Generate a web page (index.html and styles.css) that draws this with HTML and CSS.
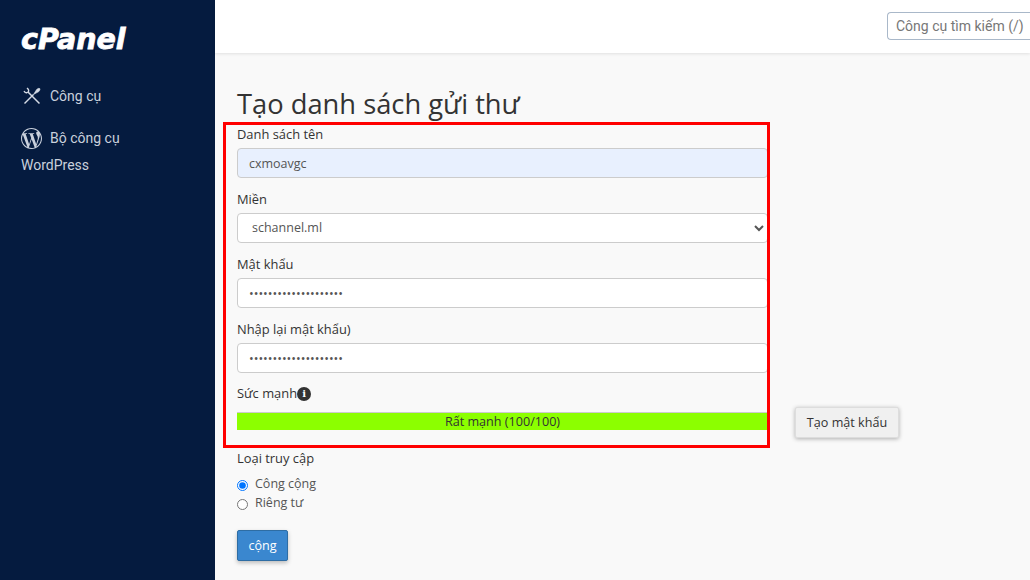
FILE: index.html
```html
<!DOCTYPE html>
<html lang="vi">
<head>
<meta charset="UTF-8">
<meta name="viewport" content="width=device-width, initial-scale=1.0">
<title>Tạo danh sách gửi thư</title>
<link rel="stylesheet" href="styles.css">
</head>
<body>

<div class="sidebar">
    <div class="logo">cPanel</div>
    <a class="side-link" href="#">
        <svg class="side-icon" viewBox="0 0 20 20" fill="none" stroke="#d5dbe5">
            <path d="M2.5 17.5 L11.5 8.5" stroke-width="1.5" />
            <path d="M11.5 8.5 L14.6 3.6 Q16.6 1.8 17.8 2.6 Q18.6 3.8 16.8 5.6 Z" fill="#d5dbe5" stroke-width="0.6" />
            <path d="M6 6 L17.5 17.5" stroke-width="1.5" />
            <path d="M2 5 Q3 7.2 5 6.6 Q7 6 6.6 4 Q6.2 3 5 2" stroke-width="1.3" />
        </svg>
        <span>Công cụ</span>
    </a>
    <a class="side-link wp-link" href="#">
        <svg class="side-icon wp-icon" viewBox="0 0 24 24" fill="#c9d0dc">
            <path d="M21.469 6.825c.84 1.537 1.318 3.3 1.318 5.175 0 3.979-2.156 7.456-5.363 9.325l3.295-9.527c.615-1.54.82-2.771.82-3.864 0-.405-.026-.78-.07-1.11m-7.981.105c.647-.03 1.232-.105 1.232-.105.582-.075.514-.93-.067-.899 0 0-1.755.135-2.88.135-1.064 0-2.85-.15-2.85-.15-.585-.03-.661.855-.075.885 0 0 .54.061 1.125.09l1.68 4.605-2.37 7.08L5.354 6.9c.649-.03 1.234-.1 1.234-.1.585-.075.516-.93-.065-.896 0 0-1.746.138-2.874.138-.2 0-.438-.008-.69-.015C4.911 3.15 8.235 1.215 12 1.215c2.809 0 5.365 1.072 7.286 2.833-.046-.003-.091-.009-.141-.009-1.06 0-1.812.923-1.812 1.914 0 .89.513 1.643 1.06 2.531.411.72.89 1.643.89 2.977 0 .915-.354 1.994-.821 3.479l-1.075 3.585-3.9-11.61.001.014zM12 22.784c-1.059 0-2.081-.153-3.048-.437l3.237-9.406 3.315 9.087c.024.053.05.101.078.149-1.12.393-2.325.609-3.582.609M1.211 12c0-1.564.336-3.05.935-4.39L7.29 21.709C3.694 19.96 1.212 16.271 1.211 12M12 0C5.385 0 0 5.385 0 12s5.385 12 12 12 12-5.385 12-12S18.615 0 12 0"/>
        </svg>
        <span class="wp-text">Bộ công cụ</span>
        <span class="wp-text wp-line">WordPress</span>
    </a>
</div>

<div class="page">
    <div class="topbar">
        <input class="search" type="text" placeholder="Công cụ tìm kiếm (/)">
    </div>

    <div class="content">
        <h1>Tạo danh sách gửi thư</h1>

        <div class="field">
            <label>Danh sách tên</label>
            <input class="input filled" type="text" value="cxmoavgc">
        </div>
        <div class="field">
            <label>Miền</label>
            <select class="input select">
                <option>schannel.ml</option>
            </select>
        </div>
        <div class="field">
            <label>Mật khẩu</label>
            <input class="input" type="password" value="aaaaaaaaaaaaaaaaaaaa">
        </div>
        <div class="field">
            <label>Nhập lại mật khẩu)</label>
            <input class="input" type="password" value="aaaaaaaaaaaaaaaaaaaa">
        </div>

        <div class="strength">
            <label>Sức mạnh<span class="info">i</span></label>
            <div class="strength-row">
                <div class="meter">Rất mạnh (100/100)</div>
                <button class="gen-btn" type="button">Tạo mật khẩu</button>
            </div>
        </div>

        <div class="access">
            <label>Loại truy cập</label>
            <div class="radio"><input type="radio" name="access" checked><span>Công cộng</span></div>
            <div class="radio"><input type="radio" name="access"><span>Riêng tư</span></div>
        </div>

        <button class="submit" type="button">cộng</button>

        <div class="highlight"></div>
    </div>
</div>

</body>
</html>
```

FILE: styles.css
```css
html, body {
    height: 100%;
}
body {
    font-family: "Open Sans", sans-serif;
    margin: 0;
    padding: 0;
    background-color: #f9f9f9;
    color: #333;
    display: flex;
    overflow: hidden;
}

.sidebar {
    width: 215px;
    flex-shrink: 0;
    background-color: #051b3f;
    padding: 22px 0 0 21px;
    box-sizing: border-box;
}
.logo {
    font-family: "DejaVu Sans", sans-serif;
    font-size: 28.5px;
    font-weight: 700;
    font-style: italic;
    line-height: 36px;
    color: #fff;
    -webkit-text-stroke: 0.8px #fff;
    margin-bottom: 20px;
}
.side-link {
    display: flex;
    align-items: center;
    font-family: Roboto, sans-serif;
    font-size: 14px;
    color: #c9d0dc;
    text-decoration: none;
    height: 36px;
}
.side-icon {
    width: 20px;
    height: 20px;
    margin: 0 8px 0 1px;
}
.wp-link {
    flex-wrap: wrap;
    height: auto;
    margin-top: 13px;
}
.wp-icon {
    width: 21px;
    height: 21px;
    margin: 0 8px 0 0;
}
.wp-text {
    line-height: 22px;
}
.wp-line {
    width: 100%;
    margin-top: 5px;
}

.page {
    flex: 1;
    min-width: 0;
}
.topbar {
    height: 53px;
    background-color: #fff;
    box-shadow: 0 1px 3px rgba(0, 0, 0, 0.1);
    display: flex;
    justify-content: flex-end;
    padding-top: 12px;
    box-sizing: border-box;
}
.search {
    width: 143px;
    height: 28px;
    box-sizing: border-box;
    border: 1px solid #a9b8c9;
    border-right: none;
    border-radius: 4px 0 0 4px;
    padding: 0 0 0 8px;
    font-family: Roboto, sans-serif;
    font-size: 14px;
}
.search::placeholder {
    color: #777;
}

.content {
    position: relative;
    padding: 31px 0 0 22px;
}
h1 {
    font-size: 27.3px;
    font-weight: 400;
    line-height: 40px;
    margin: 0;
}
label {
    display: block;
    font-size: 12.9px;
    font-weight: 500;
    line-height: 20px;
    margin-bottom: 4px;
}
.field {
    width: 531px;
    margin-bottom: 11px;
}
.input {
    display: block;
    width: 100%;
    height: 30px;
    box-sizing: border-box;
    border: 1px solid #ccc;
    border-radius: 4px;
    background-color: #fff;
    padding: 0 11px;
    font-family: "Open Sans", sans-serif;
    font-size: 12.5px;
    color: #555;
}
.select {
    padding: 0 10px 2px;
}
.filled {
    background-color: #e8f0fe;
}
.strength {
    margin-top: -1px;
}
.strength label {
    margin-bottom: 3px;
}
.info {
    display: inline-block;
    width: 14px;
    height: 14px;
    border-radius: 50%;
    background-color: #333;
    color: #fff;
    font-family: "DejaVu Serif", serif;
    font-size: 10px;
    font-weight: 700;
    line-height: 14px;
    text-align: center;
    vertical-align: 1px;
}
.strength-row {
    display: flex;
    align-items: flex-start;
    gap: 27px;
}
.meter {
    width: 531px;
    height: 18px;
    margin-top: 6px;
    box-sizing: border-box;
    background-color: #8cff00;
    border-top: 1px solid #ccc;
    font-size: 12.6px;
    line-height: 17px;
    text-align: center;
}
.gen-btn {
    width: 104px;
    height: 31px;
    margin-top: 1px;
    border: 1px solid #ddd;
    border-radius: 2px;
    background-color: #f0f0f0;
    box-shadow: 0 1px 4px rgba(0, 0, 0, 0.3);
    font-family: "Open Sans", sans-serif;
    font-size: 12.6px;
    color: #333;
    padding: 0;
}
.access {
    margin-top: 10px;
}
.access label {
    margin-bottom: 6px;
}
.radio {
    display: flex;
    align-items: center;
    height: 19px;
    font-size: 12.5px;
    color: #555;
}
.radio input {
    width: 11px;
    height: 11px;
    margin: 4px 7px 0 0;
}
.submit {
    display: block;
    width: 51px;
    height: 31px;
    margin-top: 18px;
    border: 1px solid #2e6da4;
    border-radius: 2px;
    background-color: #3a87cf;
    box-shadow: 0 2px 4px rgba(0, 0, 0, 0.25);
    font-family: "Open Sans", sans-serif;
    font-size: 12.6px;
    color: #fff;
    padding: 0;
}
.highlight {
    position: absolute;
    left: 8px;
    top: 69px;
    width: 547px;
    height: 326px;
    box-sizing: border-box;
    border: 3px solid #f00;
}
```
